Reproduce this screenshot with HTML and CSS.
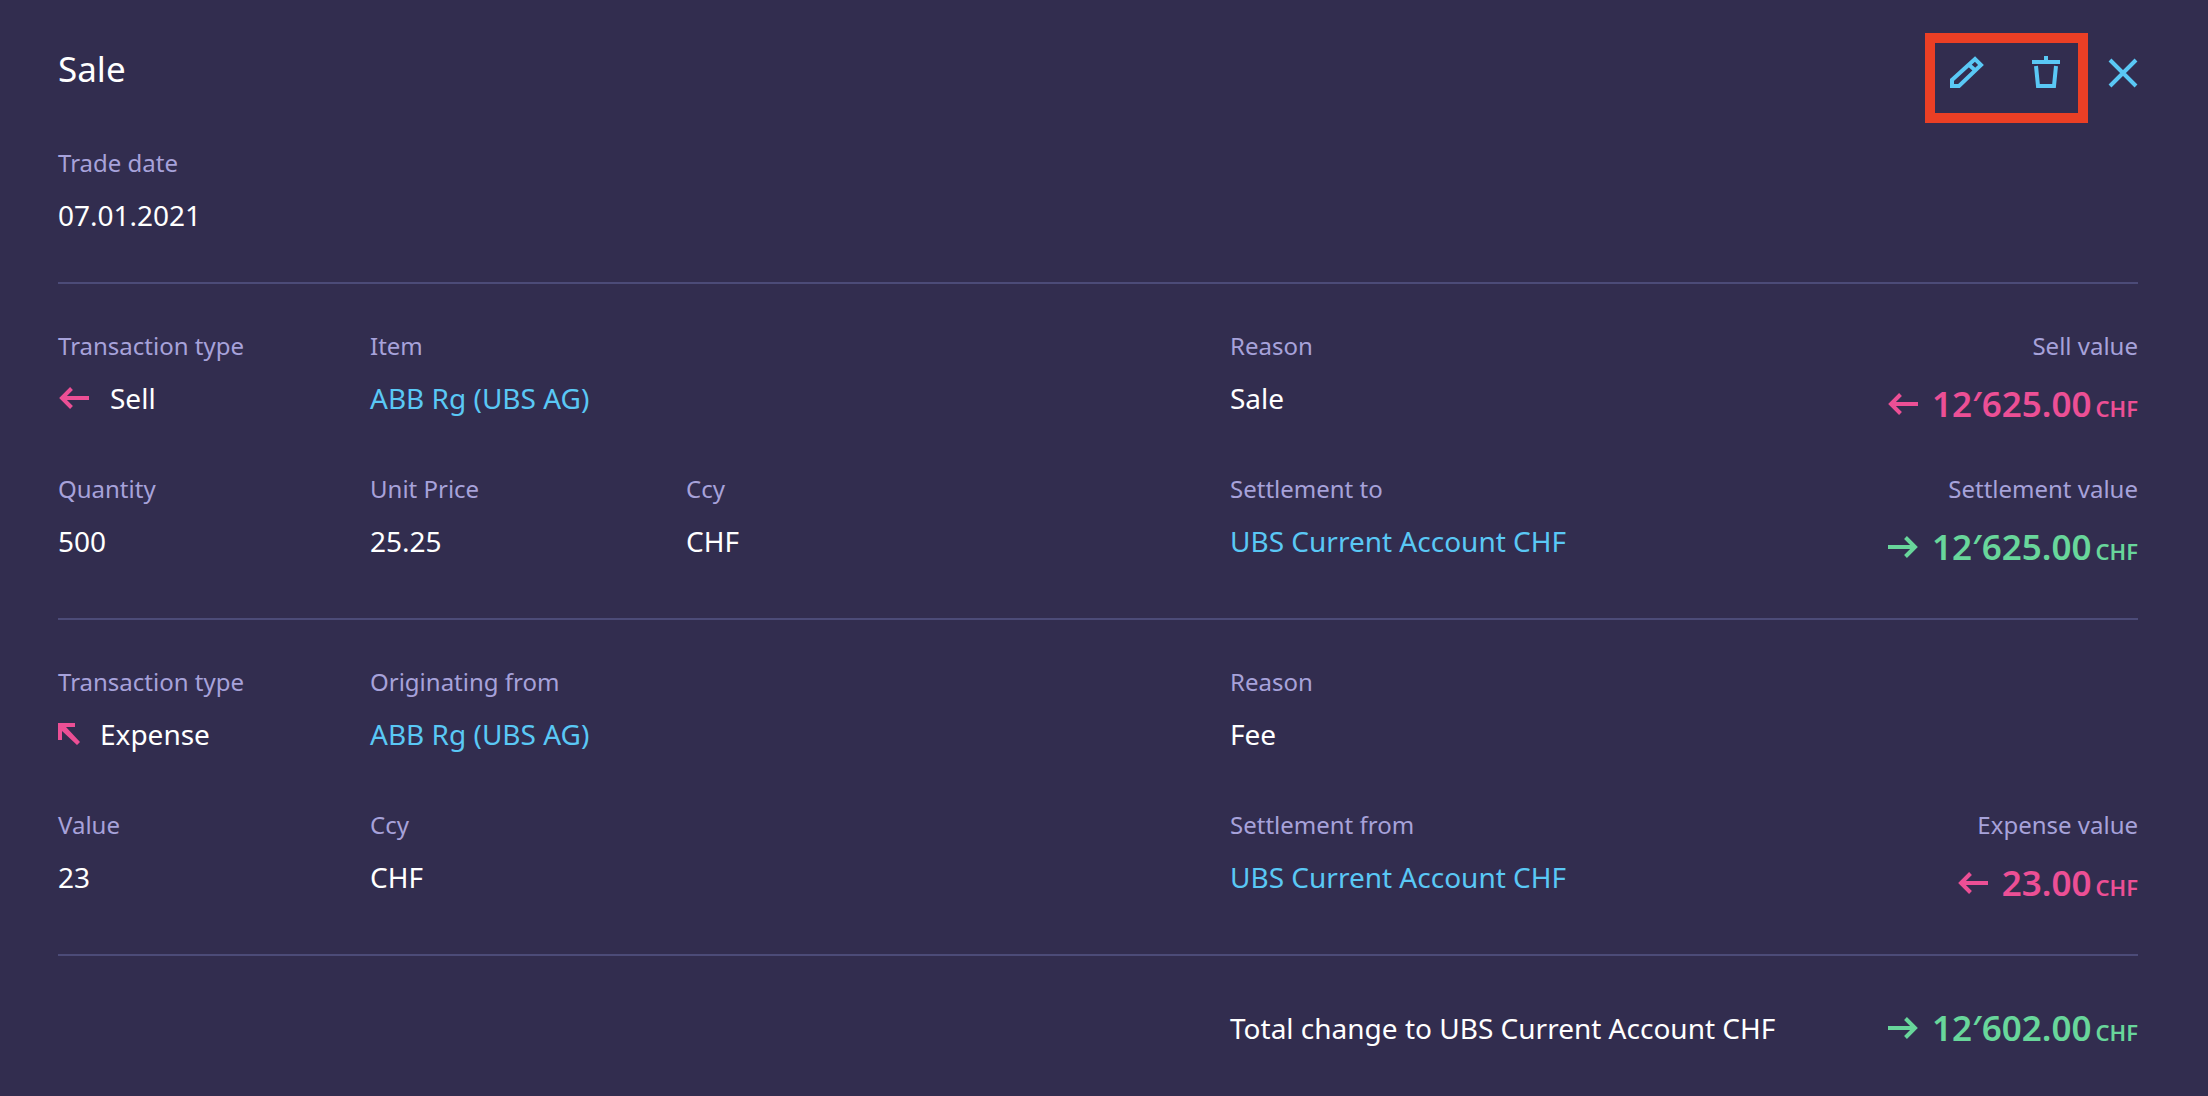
FILE: index.html
```
<!DOCTYPE html>
<html lang="en">
<head>
    <meta charset="UTF-8">
    <meta name="viewport" content="width=device-width, initial-scale=1.0">
    <title>Sale</title>
    <link rel="stylesheet" href="styles.css">
</head>
<body>
    <!-- Shared arrow shapes -->
    <svg class="sprite" aria-hidden="true">
        <symbol id="arrow-left" viewBox="0 0 30 22">
            <path d="M30 11H3M12.500 1.500L3 11l9.500 9.500" fill="none" stroke="currentColor" stroke-width="4"/>
        </symbol>
        <symbol id="arrow-right" viewBox="0 0 30 22">
            <path d="M0 11h27M17.500 1.500L27 11l-9.500 9.500" fill="none" stroke="currentColor" stroke-width="4"/>
        </symbol>
        <symbol id="arrow-up-left" viewBox="0 0 22 22">
            <path d="M0 0h17v4H8l14 15-3 3L4 8v9H0z" fill="currentColor"/>
        </symbol>
    </svg>

    <main class="panel">
        <header class="header">
            <h1>Sale</h1>
            <div class="actions">
                <div class="highlight">
                    <button type="button" aria-label="Edit">
                        <svg width="34" height="32" viewBox="0 0 34 32">
                            <path d="M2 30v-6L25 3l6 6L9 30zM18 8l8 7" fill="none" stroke="currentColor" stroke-width="4"/>
                        </svg>
                    </button>
                    <button type="button" aria-label="Delete">
                        <svg width="28" height="32" viewBox="0 0 28 32">
                            <path d="M0 6h28M14 0v6M4 10l2 20h16l2-20" fill="none" stroke="currentColor" stroke-width="4"/>
                        </svg>
                    </button>
                </div>
                <button type="button" class="close" aria-label="Close">
                    <svg width="30" height="30" viewBox="0 0 30 30">
                        <path d="M2 2l26 26M28 2L2 28" fill="none" stroke="currentColor" stroke-width="4"/>
                    </svg>
                </button>
            </div>
        </header>

        <dl class="trade-date">
            <div class="field">
                <dt>Trade date</dt>
                <dd>07.01.2021</dd>
            </div>
        </dl>

        <dl class="section">
            <div class="field">
                <dt>Transaction type</dt>
                <dd class="type"><svg class="negative" width="32" height="22"><use href="#arrow-left"/></svg>Sell</dd>
            </div>
            <div class="field wide">
                <dt>Item</dt>
                <dd><a href="#">ABB Rg (UBS AG)</a></dd>
            </div>
            <div class="field">
                <dt>Reason</dt>
                <dd>Sale</dd>
            </div>
            <div class="field right">
                <dt>Sell value</dt>
                <dd class="money negative"><svg width="30" height="22"><use href="#arrow-left"/></svg><span class="amount">12′625.00 <small>CHF</small></span></dd>
            </div>

            <div class="field">
                <dt>Quantity</dt>
                <dd>500</dd>
            </div>
            <div class="field">
                <dt>Unit Price</dt>
                <dd>25.25</dd>
            </div>
            <div class="field">
                <dt>Ccy</dt>
                <dd>CHF</dd>
            </div>
            <div class="field">
                <dt>Settlement to</dt>
                <dd><a href="#">UBS Current Account CHF</a></dd>
            </div>
            <div class="field right">
                <dt>Settlement value</dt>
                <dd class="money positive"><svg width="30" height="22"><use href="#arrow-right"/></svg><span class="amount">12′625.00 <small>CHF</small></span></dd>
            </div>
        </dl>

        <dl class="section">
            <div class="field">
                <dt>Transaction type</dt>
                <dd class="type"><svg class="negative" width="22" height="22"><use href="#arrow-up-left"/></svg>Expense</dd>
            </div>
            <div class="field wide">
                <dt>Originating from</dt>
                <dd><a href="#">ABB Rg (UBS AG)</a></dd>
            </div>
            <div class="field wide">
                <dt>Reason</dt>
                <dd>Fee</dd>
            </div>

            <div class="field">
                <dt>Value</dt>
                <dd>23</dd>
            </div>
            <div class="field wide">
                <dt>Ccy</dt>
                <dd>CHF</dd>
            </div>
            <div class="field">
                <dt>Settlement from</dt>
                <dd><a href="#">UBS Current Account CHF</a></dd>
            </div>
            <div class="field right">
                <dt>Expense value</dt>
                <dd class="money negative"><svg width="30" height="22"><use href="#arrow-left"/></svg><span class="amount">23.00 <small>CHF</small></span></dd>
            </div>
        </dl>

        <footer class="section total">
            <div class="total-row">
                <span>Total change to UBS Current Account CHF</span>
                <span class="money positive"><svg width="30" height="22"><use href="#arrow-right"/></svg><span class="amount">12′602.00 <small>CHF</small></span></span>
            </div>
        </footer>
    </main>
</body>
</html>
```
FILE: styles.css
```
* {
    box-sizing: border-box;
}
body {
    margin: 0;
    background-color: #322d4f;
    color: #fff;
    font-family: "Noto Sans", "Open Sans", sans-serif;
    font-size: 28px;
    line-height: 40px;
}
.sprite {
    display: none;
}
.panel {
    padding: 33px 70px 0 58px;
}
.header {
    display: flex;
    justify-content: space-between;
    align-items: flex-start;
    min-height: 114px;
}
h1 {
    margin: 12px 0 0;
    font-size: 35px;
    font-weight: 400;
    line-height: 48px;
}
.actions {
    display: flex;
    gap: 20px;
}
.highlight {
    display: flex;
    gap: 48px;
    padding: 13px 18px 25px 15px;
    border: 10px solid #eb3f25;
}
button {
    padding: 0;
    border: none;
    background: none;
    color: #5ac8f5;
    cursor: pointer;
}
button svg {
    display: block;
}
.close {
    align-self: flex-start;
    margin-top: 25px;
}
dl, dd {
    margin: 0;
}
.trade-date {
    padding-bottom: 47px;
}
.field {
    display: flex;
    flex-direction: column;
    gap: 16px;
}
dt {
    color: #a7a2da;
    font-size: 24px;
    line-height: 32px;
}
a {
    color: #5ac8f5;
    text-decoration: none;
}
.section {
    display: grid;
    grid-template-columns: 78fr 79fr 136fr 110fr 117fr;
    grid-auto-rows: minmax(100px, auto);
    row-gap: 43px;
    padding: 46px 0 45px;
    border-top: 2px solid #4c4b78;
}
.wide {
    grid-column-end: span 2;
}
.right {
    align-items: flex-end;
}
.type {
    display: flex;
    align-items: center;
    gap: 20px;
}
.money {
    display: flex;
    align-items: center;
    gap: 14px;
    font-size: 35px;
    font-weight: 600;
    line-height: 52px;
}
.amount {
    display: flex;
    align-items: baseline;
    gap: 4px;
}
.amount small {
    font-size: 22px;
    line-height: 1;
}
.negative {
    color: #ec4f95;
}
.positive {
    color: #68d69b;
}
.total {
    grid-auto-rows: auto;
    padding-bottom: 40px;
}
.total-row {
    display: flex;
    justify-content: space-between;
    align-items: center;
    grid-column: 4 / -1;
}
```
